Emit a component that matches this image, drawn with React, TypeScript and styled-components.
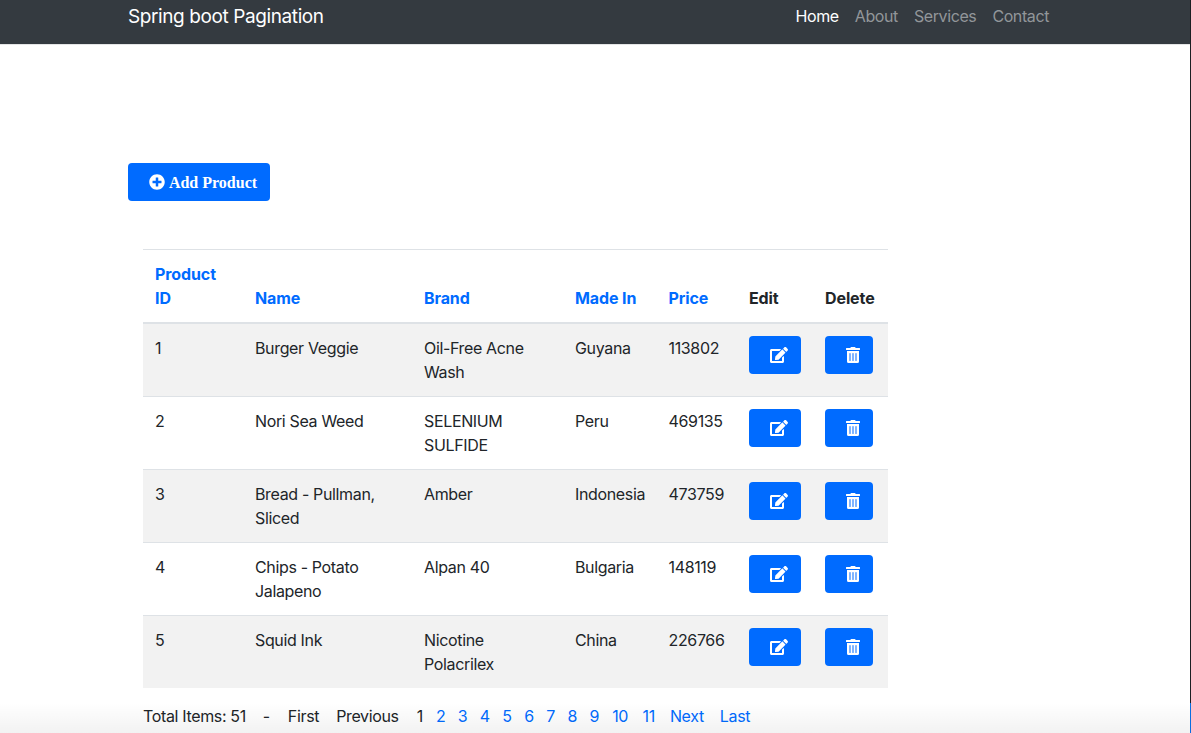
import React from 'react'
import styled, { createGlobalStyle } from 'styled-components'
import { FaEdit, FaPlusCircle, FaTrashAlt } from 'react-icons/fa'

const GlobalStyle = createGlobalStyle`
    html, body {
        margin: 0;
        padding: 0;
        height: 733px;
        overflow: hidden;
        background: #fff;
        font-family: Inter, "Liberation Sans", sans-serif;
        font-size: 16px;
        color: #212529;
    }
`

const Page = styled.div`
    position: relative;
    width: 1191px;
    height: 733px;
    overflow: hidden;
`

const Navbar = styled.nav`
    height: 44px;
    padding: 0 142px 0 128px;
    display: flex;
    align-items: center;
    justify-content: space-between;
    background: #343a40;
    border-bottom: 1px solid #e4e5e6;
`

const Brand = styled.a`
    font-size: 19px;
    letter-spacing: -0.4px;
    color: #fff;
    margin-bottom: 11px;
`

const NavList = styled.div`
    display: flex;
    gap: 16px;
    margin-bottom: 13px;
    letter-spacing: -0.4px;
`

const NavLink = styled.a<{ $active?: boolean }>`
    font-size: 16px;
    color: ${p => (p.$active ? '#fff' : '#92969a')};
`

const Content = styled.main`
    padding: 118px 0 0 128px;
`

const AddButton = styled.button`
    width: 142px;
    height: 38px;
    padding: 1px 0 0 8px;
    display: flex;
    align-items: center;
    justify-content: center;
    gap: 4px;
    border: 0;
    border-radius: 4px;
    background: #006bff;
    color: #fff;
    font-family: "Liberation Serif", serif;
    font-weight: 700;
    font-size: 16px;

    svg {
        width: 16px;
        height: 16px;
        margin-top: -1px;
    }
`

const Table = styled.table`
    width: 745px;
    margin: 48px 0 0 15px;
    border-collapse: collapse;
    table-layout: fixed;
    border-top: 1px solid #dee2e6;
`

const Head = styled.th<{ $link?: boolean }>`
    padding: 12px;
    height: 48px;
    text-align: left;
    vertical-align: bottom;
    font-size: 16px;
    line-height: 24px;
    font-weight: 700;
    letter-spacing: -0.1px;
    color: ${p => (p.$link ? '#006bff' : '#212529')};
    border-bottom: 2px solid #dee2e6;
`

const Row = styled.tr<{ $odd: boolean }>`
    background: ${p => (p.$odd ? '#f2f2f2' : '#fff')};
    border-bottom: 1px solid #dee2e6;

    &:last-child {
        border-bottom: 0;
    }
`

const Cell = styled.td`
    padding: 12px;
    vertical-align: top;
    font-size: 16px;
    line-height: 24px;
    letter-spacing: -0.35px;
    height: 48px;
    box-sizing: content-box;
`

const IconButton = styled.button<{ $width: number }>`
    width: ${p => p.$width}px;
    height: 38px;
    padding: 0 0 0 8px;
    display: flex;
    align-items: center;
    justify-content: center;
    border: 0;
    border-radius: 4px;
    background: #006bff;
    color: #fff;

    svg {
        width: 18px;
        height: 16px;
    }
`

const Pager = styled.div`
    display: flex;
    align-items: center;
    height: 24px;
    margin: 16px 0 0 15px;
    font-size: 16px;
    line-height: 24px;
    letter-spacing: -0.35px;
    white-space: nowrap;
`

const PagerItem = styled.span<{ $link?: boolean; $gap: number }>`
    margin-right: ${p => p.$gap}px;
    color: ${p => (p.$link ? '#006bff' : '#212529')};
`

const BottomFade = styled.div`
    position: absolute;
    left: 0;
    right: 0;
    bottom: 0;
    height: 30px;
    background: linear-gradient(to bottom, rgba(0, 0, 0, 0), rgba(0, 0, 0, 0.05));
    pointer-events: none;
`

const EdgeStrip = styled.div`
    position: absolute;
    top: 0;
    right: 0;
    bottom: 0;
    width: 1px;
    background: linear-gradient(to bottom, #1c1f22 0, #1c1f22 703px, #0a6ee0 703px);
`

const widths = [100, 169, 151, 93.5, 80.5, 76, 75]

const columns = [
    { label: 'Product ID', link: true },
    { label: 'Name', link: true },
    { label: 'Brand', link: true },
    { label: 'Made In', link: true },
    { label: 'Price', link: true },
    { label: 'Edit', link: false },
    { label: 'Delete', link: false }
]

const products = [
    { id: 1, name: 'Burger Veggie', brand: 'Oil-Free Acne Wash', madeIn: 'Guyana', price: 113802 },
    { id: 2, name: 'Nori Sea Weed', brand: 'SELENIUM SULFIDE', madeIn: 'Peru', price: 469135 },
    { id: 3, name: 'Bread - Pullman, Sliced', brand: 'Amber', madeIn: 'Indonesia', price: 473759 },
    { id: 4, name: 'Chips - Potato Jalapeno', brand: 'Alpan 40', madeIn: 'Bulgaria', price: 148119 },
    { id: 5, name: 'Squid Ink', brand: 'Nicotine Polacrilex', madeIn: 'China', price: 226766 }
]

const pager = [
    { label: 'Total Items: 51', gap: 17 },
    { label: '-', gap: 18 },
    { label: 'First', gap: 17 },
    { label: 'Previous', gap: 18 },
    { label: '1', gap: 13 },
    ...['2', '3', '4', '5', '6', '7', '8'].map(label => ({ label, gap: 12.5, link: true })),
    { label: '9', gap: 13, link: true },
    { label: '10', gap: 14.5, link: true },
    { label: '11', gap: 15, link: true },
    { label: 'Next', gap: 16, link: true },
    { label: 'Last', gap: 0, link: true }
]

export default function App() {
    return (
        <Page>
            <GlobalStyle />
            <Navbar>
                <Brand>Spring boot Pagination</Brand>
                <NavList>
                    <NavLink $active>Home</NavLink>
                    <NavLink>About</NavLink>
                    <NavLink>Services</NavLink>
                    <NavLink>Contact</NavLink>
                </NavList>
            </Navbar>
            <Content>
                <AddButton>
                    <FaPlusCircle />
                    Add Product
                </AddButton>
                <Table>
                    <colgroup>
                        {widths.map((w, i) => <col key={i} width={w} />)}
                    </colgroup>
                    <thead>
                        <tr>
                            {columns.map(c => <Head key={c.label} $link={c.link}>{c.label}</Head>)}
                        </tr>
                    </thead>
                    <tbody>
                        {products.map(p => (
                            <Row key={p.id} $odd={p.id % 2 === 1}>
                                <Cell>{p.id}</Cell>
                                <Cell>{p.name}</Cell>
                                <Cell>{p.brand}</Cell>
                                <Cell>{p.madeIn}</Cell>
                                <Cell>{p.price}</Cell>
                                <Cell><IconButton $width={52}><FaEdit /></IconButton></Cell>
                                <Cell><IconButton $width={48}><FaTrashAlt /></IconButton></Cell>
                            </Row>
                        ))}
                    </tbody>
                </Table>
                <Pager>
                    {pager.map(item => (
                        <PagerItem key={item.label} $gap={item.gap} $link={item.link}>{item.label}</PagerItem>
                    ))}
                </Pager>
            </Content>
            <BottomFade />
            <EdgeStrip />
        </Page>
    )
}
